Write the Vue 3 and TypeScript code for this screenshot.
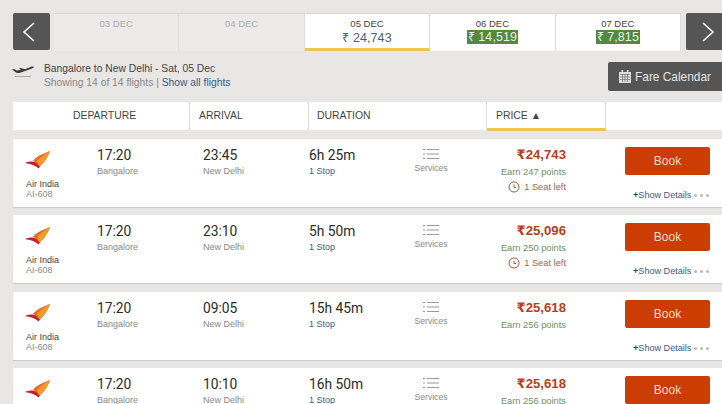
<script setup lang="ts">
interface Flight { dep: string; arr: string; dur: string; price: string; points: number; seat: boolean }
const flights: Flight[] = [
  { dep: '17:20', arr: '23:45', dur: '6h 25m', price: '24,743', points: 247, seat: true },
  { dep: '17:20', arr: '23:10', dur: '5h 50m', price: '25,096', points: 250, seat: true },
  { dep: '17:20', arr: '09:05', dur: '15h 45m', price: '25,618', points: 256, seat: false },
  { dep: '17:20', arr: '10:10', dur: '16h 50m', price: '25,618', points: 256, seat: false },
]
</script>

<template>
  <div class="page">
    <div class="dates">
      <button class="nav prev">
        <svg width="16" height="20" viewBox="0 0 16 20"><path d="M13 1 3 10l10 9" fill="none" stroke="#fff" stroke-width="1.5" /></svg>
      </button>
      <div class="tabs">
        <div class="tab off"><span class="d">03 DEC</span></div>
        <div class="tab off"><span class="d">04 DEC</span></div>
        <div class="tab active"><span class="d">05 DEC</span><span class="p">₹ 24,743</span></div>
        <div class="tab"><span class="d">06 DEC</span><span class="p green">₹ 14,519</span></div>
        <div class="tab"><span class="d">07 DEC</span><span class="p green">₹ 7,815</span></div>
      </div>
      <button class="nav next">
        <svg width="16" height="20" viewBox="0 0 16 20"><path d="M3 1l10 9-10 9" fill="none" stroke="#fff" stroke-width="1.5" /></svg>
      </button>
    </div>

    <div class="summary">
      <svg class="plane" width="22" height="13" viewBox="0 0 22 13">
        <path d="M0 4.500 2 4l3 1.500L9 4.700 7 3.400l1.600-.3 4.400 1.200L19 1.800c1.400-.4 2.600-.3 2.800.1.100.5-1 1.200-2.400 1.800L8 7.800c-1.800.5-3.600 0-4.600-.9Z" fill="#3a3a3a" />
        <path d="M3 11.500h16" stroke="#aaa" stroke-width="1" />
      </svg>
      <div class="sum-text">
        <div class="route">Bangalore to New Delhi - Sat, 05 Dec</div>
        <div class="showing">Showing 14 of 14 flights | <span class="link">Show all flights</span></div>
      </div>
      <button class="calendar">
        <svg width="12" height="13" viewBox="0 0 12 13">
          <path d="M0 2h12v11H0Z" fill="#ddd" />
          <path d="M2.500 0h1.600v3H2.500ZM7.900 0h1.600v3H7.900Z" fill="#ddd" />
          <path d="M1 4.500h10M1 7h10M1 9.500h10M3.500 4v8M6 4v8M8.500 4v8" stroke="#666" stroke-width=".6" />
        </svg>
        Fare Calendar
      </button>
    </div>

    <div class="header">
      <div class="h h1">DEPARTURE</div>
      <div class="h h2">ARRIVAL</div>
      <div class="h h3">DURATION</div>
      <div class="h h4">PRICE ▲</div>
    </div>

    <div v-for="(f, i) in flights" :key="i" class="card">
      <div class="airline">
        <svg class="logo" width="26" height="18" viewBox="0 0 26 18">
          <path d="M0 12C4 10 9 10 12 12L15.500 15 13.500 17.500C10 14 5 13 0 12Z" fill="#c6202f" />
          <path d="M25 0C20 2 12 5 8 9.500L10 11 14.500 15.500C19 12 23 6 25 0Z" fill="#e8691f" />
          <path d="M25 0C20 3 15 6 12 10L14.500 15.500C19 12 23 6 25 0Z" fill="#f39a2d" />
        </svg>
        <div class="air-name">Air India</div>
        <div class="air-code">AI-608</div>
      </div>
      <div class="col">
        <div class="time">{{ f.dep }}</div>
        <div class="city">Bangalore</div>
      </div>
      <div class="col">
        <div class="time">{{ f.arr }}</div>
        <div class="city">New Delhi</div>
      </div>
      <div class="col">
        <div class="time">{{ f.dur }}</div>
        <div class="stop">1 Stop</div>
      </div>
      <div class="services">
        <svg width="16" height="12" viewBox="0 0 16 12">
          <path d="M0 1.500h2M4 1.500h12M0 6h2M4 6h12M0 10.500h2M4 10.500h12" stroke="#999" stroke-width="1" />
        </svg>
        <div class="svc-label">Services</div>
      </div>
      <div class="price-col">
        <div class="price">₹{{ f.price }}</div>
        <div class="earn">Earn {{ f.points }} points</div>
        <div v-if="f.seat" class="seat">
          <svg width="12" height="12" viewBox="0 0 12 12">
            <circle cx="6" cy="6" r="5" fill="none" stroke="#b5522f" stroke-width="1" />
            <path d="M6 3.500V6.500H8" fill="none" stroke="#b5522f" stroke-width="1" />
          </svg>
          1 Seat left
        </div>
      </div>
      <div class="book-col">
        <button class="book">Book</button>
        <div class="details"><b>+</b>Show Details <span class="dots"><i></i><i></i><i></i></span></div>
      </div>
    </div>
  </div>
</template>

<style>
html, body { margin: 0; background: #e8e7e5; }
</style>

<style scoped>
.page {
  width: 722px;
  height: 404px;
  overflow: hidden;
  background: #e8e7e5;
  padding-top: 13px;
  box-sizing: border-box;
  font-family: "Liberation Sans", Arial, sans-serif;
  color: #333;
}
button { font-family: inherit; border: 0; cursor: pointer; padding: 0; }
.dates { display: flex; height: 38px; padding-left: 13px; }
.nav {
  width: 37px;
  height: 37px;
  background: #555;
  border-radius: 2px;
  flex: none;
  display: flex;
  align-items: center;
  justify-content: center;
}
.prev { padding-right: 5px; box-sizing: border-box; }
.next { margin-left: 5px; padding-left: 7px; box-sizing: border-box; }
.tabs {
  margin-left: 4px;
  display: flex;
  width: 627px;
  height: 38px;
  box-sizing: border-box;
  border-top: 1px solid #d8d8d8;
}
.tab {
  width: 125.400px;
  height: 37px;
  box-sizing: border-box;
  background: #fff;
  border-right: 1px solid #ddd;
  display: flex;
  flex-direction: column;
  align-items: center;
  padding-top: 4px;
}
.tab.off { background: #ecebe9; }
.tab.off .d { color: #aaa; }
.tab.active { border-bottom: 3px solid #eac94c; }
.d { font-size: 9.500px; line-height: 11px; color: #444; }
.p { font-size: 12.500px; line-height: 14px; margin-top: 2px; color: #4a5f80; letter-spacing: .1px; }
.green { background: #52893f; color: #e9f2e4; padding: 0 1px; line-height: 14px; margin-top: 1px; }

.summary {
  display: flex;
  height: 40px;
  margin-top: 11px;
  padding-left: 12px;
}
.plane { margin-top: 3px; flex: none; }
.sum-text { margin-left: 10px; font-size: 10.300px; line-height: 14px; }
.route { color: #444; }
.showing { color: #888; }
.link { color: #3d5a8a; }
.calendar {
  margin-left: auto;
  width: 114px;
  height: 29px;
  background: #555;
  color: #e4e4e4;
  font-size: 11.900px;
  border-radius: 2px 0 0 2px;
  display: flex;
  align-items: center;
  gap: 4px;
  padding-left: 11px;
  box-sizing: border-box;
}

.header {
  display: flex;
  height: 28px;
  margin-left: 13px;
  background: #fff;
  margin-bottom: 9px;
  box-sizing: border-box;
  font-size: 10.400px;
  color: #444;
}
.h { height: 28px; box-sizing: border-box; line-height: 27px; border-right: 1px solid #ddd; }
.h1 { width: 177px; padding-left: 60px; }
.h2 { width: 119px; padding-left: 9px; }
.h3 { width: 178px; padding-left: 8px; }
.h4 { width: 119px; padding-left: 9px; border-bottom: 3px solid #eac94c; height: 29px; }

.card {
  display: grid;
  grid-template-columns: 84px 106px 106px 90px 64px 103px 59px 85px;
  height: 68px;
  margin-left: 13px;
  margin-bottom: 8.330px;
  background: #fff;
  box-shadow: 0 1px 1px #ccc;
}
.airline { padding: 12px 0 0 13px; }
.logo { display: block; margin-left: -1px; }
.air-name { font-size: 9px; line-height: 10px; color: #444; margin-top: 10px; }
.air-code { font-size: 9px; line-height: 10px; color: #888; }
.col { padding-top: 7px; }
.time { font-family: Roboto, sans-serif; font-size: 13.800px; line-height: 18px; color: #2b2b2b; }
.city, .stop { font-size: 9px; line-height: 12px; margin-top: 1px; color: #888; }
.stop { color: #3d5a8a; }
.services { text-align: center; padding-top: 9px; }
.services svg { display: block; margin: 0 auto; }
.svc-label { font-size: 8.600px; line-height: 10px; color: #888; margin-top: 3px; }
.price-col { text-align: right; padding-top: 7px; }
.price { font-size: 13.200px; line-height: 18px; font-weight: 700; color: #b5401c; font-family: "Liberation Sans", "DejaVu Sans", sans-serif; }
.earn { font-size: 9.300px; line-height: 12px; color: #6b9060; margin-top: 2px; }
.seat {
  font-size: 9.300px;
  line-height: 12px;
  margin-top: 3px;
  color: #b5604a;
  display: flex;
  justify-content: flex-end;
  align-items: center;
  gap: 4px;
}
.book-col { grid-column: 8; padding-top: 8px; }
.book {
  display: block;
  width: 85px;
  height: 28px;
  background: #cc3d04;
  color: #f2dccb;
  border-radius: 2px;
  font-size: 12px;
}
.details {
  margin-top: 15px;
  font-size: 9.100px;
  line-height: 11px;
  color: #3d5a8a;
  white-space: nowrap;
  margin-left: 8px;
  display: flex;
  align-items: center;
}
.details b { color: #2a4a70; font-weight: 700; }
.dots { display: inline-flex; gap: 3px; margin-left: 3px; }
.dots i { width: 3px; height: 3px; border-radius: 50%; background: #bbb; display: block; }
</style>
